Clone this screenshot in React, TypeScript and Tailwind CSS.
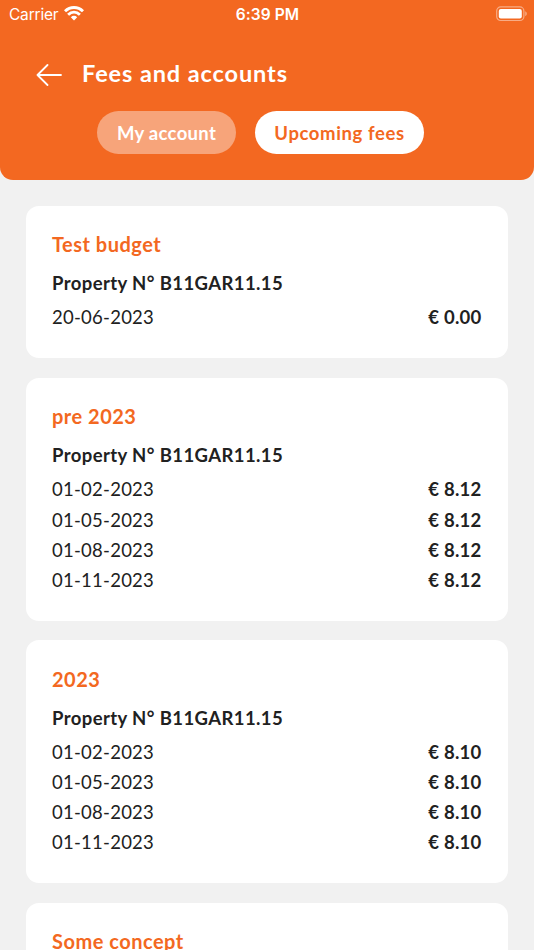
import React from "react";

type Fee = {
  date: string;
  amount: string;
};

type Budget = {
  title: string;
  property?: string;
  fees: Fee[];
};

const quarterly = (amount: string): Fee[] => [
  { date: "01-02-2023", amount },
  { date: "01-05-2023", amount },
  { date: "01-08-2023", amount },
  { date: "01-11-2023", amount },
];

const budgets: Budget[] = [
  {
    title: "Test budget",
    property: "Property N° B11GAR11.15",
    fees: [{ date: "20-06-2023", amount: "€ 0.00" }],
  },
  { title: "pre 2023", property: "Property N° B11GAR11.15", fees: quarterly("€ 8.12") },
  { title: "2023", property: "Property N° B11GAR11.15", fees: quarterly("€ 8.10") },
  { title: "Some concept", fees: [] },
];

const WifiIcon = () => (
  <svg width="20" height="16" viewBox="0 0 20 16" fill="none" stroke="currentColor" strokeWidth="2.9">
    <path d="M1 5.2C6.2 .2 13.8 .2 19 5.2" />
    <path d="M4.1 8.7C7.6 5.4 12.4 5.4 15.9 8.7" />
    <path d="M6.8 11.2C8.7 9.4 11.3 9.4 13.2 11.2L10 14.5Z" fill="currentColor" stroke="none" />
  </svg>
);

const BatteryIcon = () => (
  <svg width="32" height="16" viewBox="0 0 32 16" fill="none">
    <rect x="0.7" y="0.9" width="27.2" height="13.6" rx="4" stroke="white" strokeOpacity="0.45" strokeWidth="1.2" />
    <rect x="2.8" y="3" width="23" height="9.4" rx="2" fill="white" />
    <path d="M29.3 5.3C31.2 6 31.2 9.4 29.3 10.1Z" fill="white" fillOpacity="0.5" />
  </svg>
);

const StatusBar = () => (
  <div className="grid h-[27px] grid-cols-3 items-center pl-[9px] pr-[6px] font-['Inter',sans-serif] text-[15.5px] leading-[27px]">
    <div className="flex items-center gap-[5px]">
      <span className="w-[50px] whitespace-nowrap pt-px tracking-[-0.2px]">Carrier</span>
      <WifiIcon />
    </div>
    <span className="pr-[2px] pt-px text-center font-semibold tracking-[0.1px]">6:39 PM</span>
    <div className="flex justify-end">
      <BatteryIcon />
    </div>
  </div>
);

const Header = () => (
  <header className="h-[180px] rounded-b-[13px] bg-[#f36821] text-white">
    <StatusBar />
    <div className="flex h-[84px] items-center pl-[36px] pt-[12px]">
      <svg width="26" height="22" viewBox="0 0 26 22" fill="none" stroke="currentColor" strokeWidth="1.8" strokeLinecap="round" strokeLinejoin="round">
        <path d="M25 11H1.5M11.5 1L1.5 11L11.5 21" />
      </svg>
      <h1 className="mb-[2px] ml-[20px] text-[23.5px] font-bold tracking-[0.9px]">Fees and accounts</h1>
    </div>
    <nav className="flex gap-[19px] pl-[97px] text-[18.5px] font-bold">
      <button className="h-[43px] w-[139px] whitespace-nowrap rounded-full bg-[#f7a47a] pt-[2px] tracking-[0.3px]">My account</button>
      <button className="h-[43px] w-[169px] whitespace-nowrap rounded-full bg-white pt-[2px] tracking-[0.6px] text-[#f36821]">Upcoming fees</button>
    </nav>
  </header>
);

const BudgetCard = ({ title, property, fees }: Budget) => (
  <section className="shrink-0 rounded-[13px] bg-white px-[26px] pb-[26px] pt-[25.5px] text-[18.5px] text-[#212121]">
    <h2 className="mb-[11px] h-[26px] text-[20px] font-bold leading-[26px] tracking-[0.5px] text-[#f36821]">{title}</h2>
    {property && <div className="mb-1 h-[30px] font-bold leading-[30px] tracking-[0.4px]">{property}</div>}
    {fees.map((fee) => (
      <div key={fee.date} className="flex h-[30.1px] justify-between leading-[30px]">
        <span className="tracking-[0.25px]">{fee.date}</span>
        <span className="mr-[0.5px] font-bold tracking-[0.25px]">{fee.amount}</span>
      </div>
    ))}
  </section>
);

export default function App() {
  return (
    <div className="h-[950px] w-full overflow-hidden bg-[#f1f1f1] font-['Lato',sans-serif]">
      <Header />
      <main className="flex flex-col gap-[19.55px] px-[26px] pt-[25.8px]">
        {budgets.map((budget) => (
          <BudgetCard key={budget.title} {...budget} />
        ))}
      </main>
    </div>
  );
}
